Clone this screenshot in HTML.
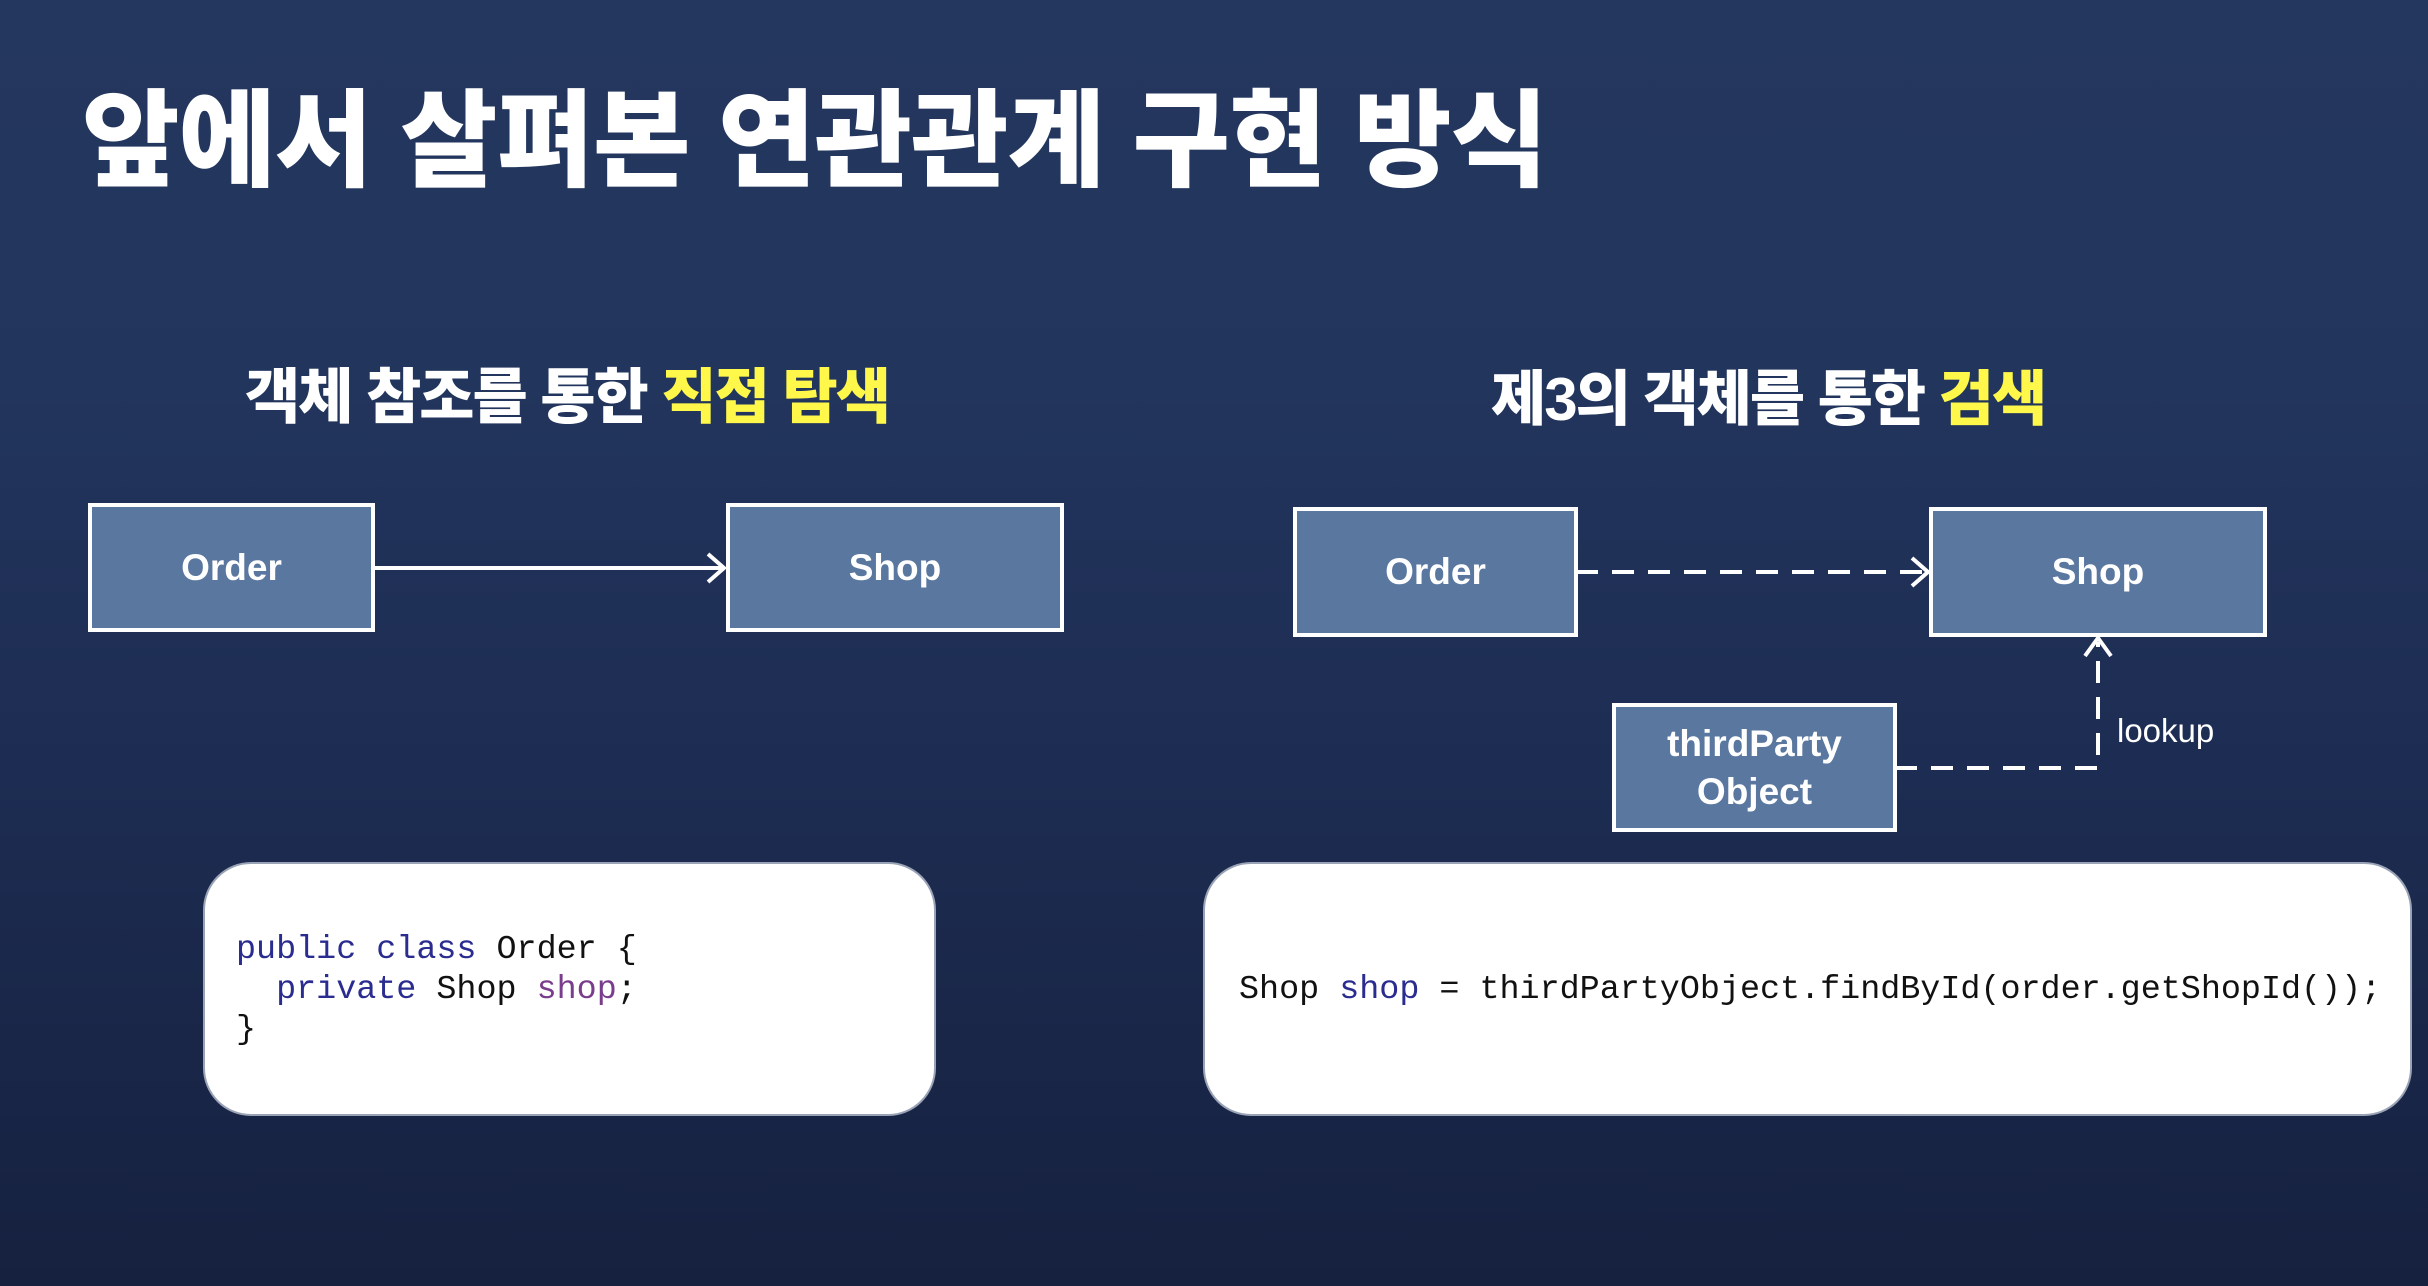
<!DOCTYPE html>
<html><head><meta charset="utf-8"><style>
html,body{margin:0;padding:0}
body{width:2428px;height:1286px;overflow:hidden;position:relative;background:linear-gradient(180deg,#24375f 0%,#22355d 30%,#1d2c52 60%,#16213f 100%);font-family:"Liberation Sans","Noto Sans CJK KR",sans-serif}
.t{position:absolute;color:#fff;font-weight:900;white-space:nowrap}
.y{color:#fff84a}
.box{position:absolute;background:#5a77a0;border:4px solid #fff;box-sizing:border-box;color:#fff;font-family:"Liberation Sans","Noto Sans CJK KR",sans-serif;font-weight:bold;font-size:37px;display:flex;align-items:center;justify-content:center;text-align:center;line-height:48px}
.code{position:absolute;background:#fff;border-radius:48px;border:2px solid #9aa3b5;box-sizing:border-box;font-family:"Liberation Mono",monospace;color:#111;white-space:pre}
.kw{color:#2a2c8f}.pv{color:#7a3c8c}
</style></head><body>
<div class="t" style="left:82px;top:82px;font-size:106px;line-height:120px;letter-spacing:-1px">앞에서 살펴본 연관관계 구현 방식</div>
<div class="t" style="left:245px;top:362px;font-size:60px;line-height:72px;letter-spacing:-2px">객체 참조를 통한 <span class="y">직접 탐색</span></div>
<div class="t" style="left:1491px;top:364px;font-size:60px;line-height:72px;letter-spacing:-2px">제3의 객체를 통한 <span class="y">검색</span></div>

<svg style="position:absolute;left:0;top:0" width="2428" height="1286">
<g stroke="#fff" stroke-width="4" fill="none">
<line x1="373" y1="568" x2="724" y2="568"/>
<polyline points="708,554 724,568 708,582"/>
<line x1="1576" y1="572" x2="1926" y2="572" stroke-dasharray="22,14"/>
<polyline points="1912,558 1928,572 1912,586"/>
<polyline points="1895,768 2098,768 2098,642" stroke-dasharray="22,14"/>
<polyline points="2085,656 2098,638 2111,656"/>
</g>
</svg>
<div class="box" style="left:88px;top:503px;width:287px;height:129px">Order</div>
<div class="box" style="left:726px;top:503px;width:338px;height:129px">Shop</div>
<div class="box" style="left:1293px;top:507px;width:285px;height:130px">Order</div>
<div class="box" style="left:1929px;top:507px;width:338px;height:130px">Shop</div>
<div class="box" style="left:1612px;top:703px;width:285px;height:129px">thirdParty<br>Object</div>
<div class="t" style="left:2117px;top:712px;font-size:33px;font-weight:normal">lookup</div>

<div class="code" style="left:203px;top:862px;width:733px;height:254px;font-size:33.4px;line-height:40px;padding:66px 0 0 31px"><span class="kw">public class</span> Order {
  <span class="kw">private</span> Shop <span class="pv">shop</span>;
}</div>
<div class="code" style="left:1203px;top:862px;width:1209px;height:254px;font-size:33.4px;line-height:40px;padding:106px 0 0 34px">Shop <span class="kw">shop</span> = thirdPartyObject.findById(order.getShopId());</div>
</body></html>
